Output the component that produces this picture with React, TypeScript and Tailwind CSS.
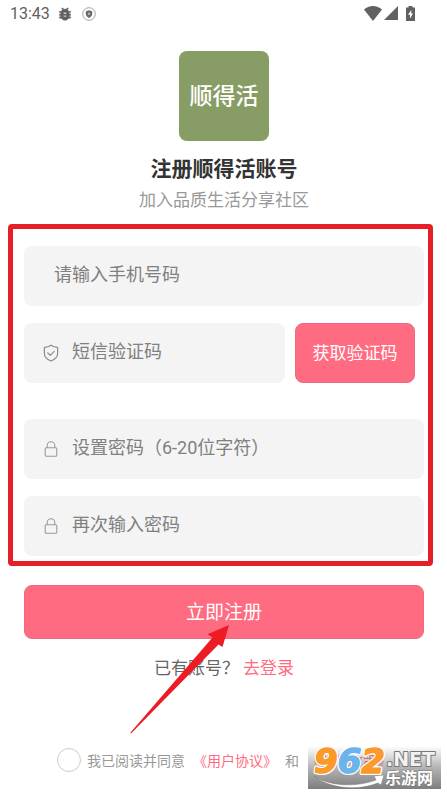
import React from 'react';

function StatusBar() {
  return (
    <div className="flex h-7 items-center justify-between pl-2.5 pr-8 text-[#616161]">
      <div className="flex items-center">
        <span className="font-[Roboto,sans-serif] text-base">13:43</span>
        <svg className="ml-2 h-3.5 w-3.5" viewBox="3 2 18 20" fill="currentColor" stroke="currentColor" strokeWidth="0.600">
          <path d="M20 8h-2.810c-.45-.78-1.070-1.450-1.820-1.960L17 4.410 15.590 3l-2.170 2.170a6 6 0 0 0-2.830 0L8.410 3 7 4.410l1.620 1.630C7.880 6.550 7.260 7.220 6.810 8H4v2h2.090C6.040 10.330 6 10.660 6 11v1H4v2h2v1c0 .34.04.67.09 1H4v2h2.810a6 6 0 0 0 10.380 0H20v-2h-2.090c.05-.33.09-.66.09-1v-1h2v-2h-2v-1c0-.34-.04-.67-.09-1H20V8zm-6 8h-4v-2h4v2zm0-4h-4v-2h4v2z" />
        </svg>
        <svg className="ml-2.5 h-3.5 w-3.5" viewBox="0 0 14 14" fill="none">
          <circle cx="7" cy="7" r="6.300" stroke="#8a8a8a" strokeWidth="0.800" />
          <path d="M7 3.200 10.200 4.200V7c0 1.800-1.400 3.100-3.200 4C5.200 10.100 3.800 8.800 3.800 7V4.200z" fill="#6a6a6a" />
          <path d="M6 5.800h2v1.600L7 8.300 6 7.400z" fill="#b5b5b5" />
        </svg>
      </div>
      <div className="flex items-center pb-0.5">
        <svg className="h-[15px] w-[18px]" viewBox="0 0 18 15" fill="currentColor">
          <path d="M9 15 0 3.500C2.500 1.300 5.600 0 9 0s6.500 1.300 9 3.500z" />
        </svg>
        <svg className="ml-0.5 h-3.5 w-3.5" viewBox="0 0 14 14" fill="currentColor">
          <path d="M14 0v14H0z" />
        </svg>
        <svg className="ml-2 h-[15px] w-[9px]" viewBox="0 0 9 15">
          <path d="M2.500 0h4v1.500H9V15H0V1.500h2.500z" fill="currentColor" />
          <path d="M5.300 4 2 8.800h2V12.500L7 7.500H5.300z" fill="#fff" />
        </svg>
      </div>
    </div>
  );
}

function ShieldIcon() {
  return (
    <svg className="h-[18px] w-4" viewBox="0 0 16 18" fill="none" stroke="#8c8c8c" strokeWidth="1.200" strokeLinejoin="round" strokeLinecap="round">
      <path d="M8 1.200c2 1.400 4.200 2 6.600 2.100v6.200c0 3.500-2.700 6-6.600 7.500-3.900-1.500-6.600-4-6.600-7.500V3.300C3.800 3.200 6 2.600 8 1.200z" />
      <path d="m4.800 9 2.500 2.300 4-4" />
    </svg>
  );
}

function LockIcon() {
  return (
    <svg className="h-[18px] w-4" viewBox="0 0 16 18" fill="none" stroke="#999" strokeWidth="1.100">
      <rect x="2.200" y="7.700" width="11.600" height="8.600" rx="1" />
      <path d="M4.200 7.700V5.600a3.800 3.800 0 0 1 7.600 0v2.100" />
    </svg>
  );
}

type FieldProps = {
  label: string;
  type?: string;
  icon?: React.ReactNode;
};

function Field({ label, type = 'text', icon }: FieldProps) {
  return (
    <label className={`flex h-[60px] min-w-0 flex-1 items-center rounded-lg bg-[#f4f4f4] pr-4 ${icon ? 'gap-[13px] pl-[19px]' : 'pl-[30px]'}`}>
      {icon}
      <input
        type={type}
        aria-label={label}
        placeholder={label}
        className="h-full min-w-0 flex-1 bg-transparent pb-1 font-[Roboto,'Noto_Sans_CJK_SC',sans-serif] text-lg text-[#333] outline-none placeholder:text-[#808080]"
      />
    </label>
  );
}

function Arrow() {
  return (
    <svg className="pointer-events-none absolute left-[106px] top-10 h-[109px] w-[100px]" viewBox="0 0 100 109">
      <path d="M99 0 92.500 22 88.500 19.500 1 108.500.300 107.800 82.500 12.500 77.500 9.200z" fill="#ed1c24" />
    </svg>
  );
}

function Watermark() {
  return (
    <svg className="pointer-events-none absolute bottom-1.5 right-1.5 h-[43px] w-[133px]" viewBox="0 0 133 43">
      <defs>
        <linearGradient id="shade" x1="0" y1="0" x2="0" y2="1">
          <stop offset="0" stopColor="#777" stopOpacity="0" />
          <stop offset="0.500" stopColor="#777" stopOpacity="0.550" />
          <stop offset="1" stopColor="#777" stopOpacity="0.950" />
        </linearGradient>
      </defs>
      <rect width="133" height="43" fill="url(#shade)" />
      <path d="M6 30c17 11 43 11 62 4l-2-4 10-1-3 10-3-2C50 45 22 43 6 30z" fill="#fff" stroke="#777" strokeWidth="0.500" />
      <g fontFamily="DejaVu Sans, sans-serif" fontWeight="700" strokeLinejoin="round">
        <g fontSize="34" fontStyle="italic" stroke="#fff" strokeWidth="4">
          <text x="6" y="27" fill="#fff">962</text>
        </g>
        <g fontSize="34" fontStyle="italic" strokeWidth="1.500">
          <text x="6" y="27" fill="#fb9a29" stroke="#fb9a29">
            9<tspan fill="#6bb3ea" stroke="#6bb3ea">6</tspan>2
          </text>
        </g>
        <text x="78" y="20" fontSize="19" fill="#f2f2f2" stroke="#777" strokeWidth="2" paintOrder="stroke">.NET</text>
      </g>
      <text x="77" y="38" fontSize="16" fontWeight="700" fontFamily="Noto Sans CJK SC, sans-serif" fill="#fff" stroke="#777" strokeWidth="1" paintOrder="stroke">乐游网</text>
    </svg>
  );
}

export default function App() {
  return (
    <div className="relative flex min-h-screen flex-col bg-white font-['Noto_Sans_CJK_SC',sans-serif]">
      <StatusBar />

      <main className="flex flex-1 flex-col pl-6 pr-[23px] pt-[23px]">
        <header className="flex flex-col items-center">
          <div className="flex h-[90px] w-[90px] items-center justify-center rounded-lg bg-[#879d65] pb-1 text-[23px] font-medium text-white">
            顺得活
          </div>
          <h1 className="mt-2.5 text-[21px] font-bold leading-8 text-[#333]">注册顺得活账号</h1>
          <p className="mt-0.5 text-[17px] leading-7 text-[#999]">加入品质生活分享社区</p>
        </header>

        <form className="mt-[33px]">
          <div className="relative flex flex-col gap-9">
            <div className="flex flex-col gap-[17px]">
              <div className="flex">
                <Field label="请输入手机号码" type="tel" />
              </div>
              <div className="flex gap-2.5 pr-[9px]">
                <Field label="短信验证码" icon={<ShieldIcon />} />
                <button type="button" className="w-[120px] rounded-lg border border-[#ee6a7e] bg-[#ff6b81] pb-0.5 text-[17px] text-white">
                  获取验证码
                </button>
              </div>
            </div>
            <div className="flex flex-col gap-[17px]">
              <div className="flex">
                <Field label="设置密码（6-20位字符）" type="password" icon={<LockIcon />} />
              </div>
              <div className="flex">
                <Field label="再次输入密码" type="password" icon={<LockIcon />} />
              </div>
            </div>
            <div className="pointer-events-none absolute -bottom-2.5 -left-4 -right-[9px] -top-[22px] rounded-sm border-5 border-[#e61e27]" />
          </div>

          <div className="relative mt-[29px]">
            <button type="submit" className="h-[54px] w-full rounded-lg border border-[#ee6a7e] bg-[#ff6b81] pb-0.5 text-[19px] text-white">
              立即注册
            </button>
            <p className="mt-4 flex justify-center text-[17px] leading-6 text-[#666]">
              已有账号？
              <a href="#login" className="ml-1 text-[#ff6b81]">去登录</a>
            </p>
            <Arrow />
          </div>
        </form>

        <div className="mt-auto flex items-center justify-center gap-2 whitespace-nowrap pb-[23px] text-sm text-[#999]">
          <label className="flex items-center gap-1.5">
            <input type="checkbox" className="h-6 w-6 appearance-none rounded-full border border-[#ccc] bg-white checked:bg-[#ff6b81]" />
            我已阅读并同意
          </label>
          <a href="#terms" className="text-[#ff6b81]">《用户协议》</a>
          <span>和</span>
          <a href="#privacy" className="text-[#ff6b81]">《隐私政策》</a>
        </div>
      </main>

      <Watermark />
    </div>
  );
}
